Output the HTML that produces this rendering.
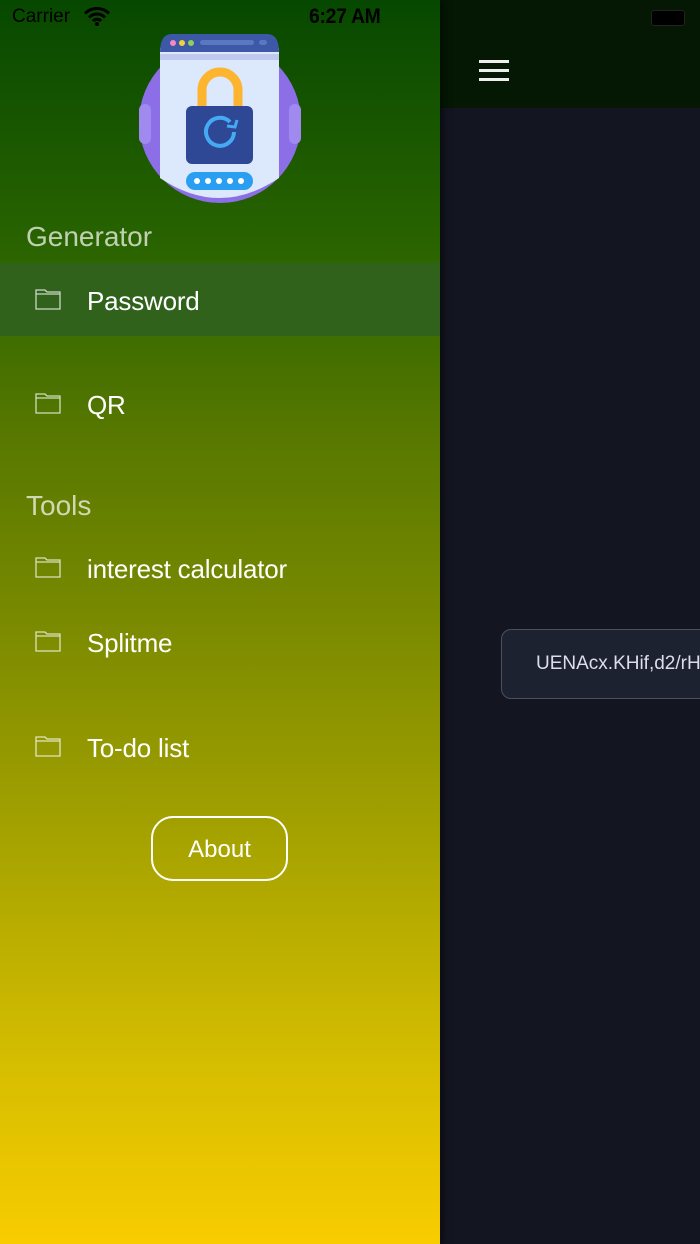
<!DOCTYPE html>
<html><head><meta charset="utf-8"><style>
html,body{margin:0;padding:0;width:700px;height:1244px;overflow:hidden;font-family:"Liberation Sans",sans-serif}
#right{position:absolute;left:440px;top:0;width:260px;height:1244px;background:#131520}
#rh{position:absolute;left:0;top:0;width:260px;height:108px;background:#041804}
#drawer{position:absolute;left:0;top:0;width:440px;height:1244px;background:linear-gradient(180deg,#064800 0%,#2a6400 20%,#577800 35%,#7a8a00 50%,#a7a300 68%,#d4bd00 85%,#f8cc00 100%);box-shadow:2px 0 8px rgba(0,0,0,.6)}
.t{position:absolute;color:#fff}
.sec{position:absolute;left:26px;font-size:28px;color:rgba(255,255,255,.7)}
.item{position:absolute;left:87px;font-size:26px;color:#fff;letter-spacing:-0.2px}
.ic{position:absolute;left:35px}
</style></head><body>
<div id="right"><div id="rh">
<div style="position:absolute;left:39px;top:60px;width:30px;height:3px;background:#eee"></div>
<div style="position:absolute;left:39px;top:69px;width:30px;height:3px;background:#eee"></div>
<div style="position:absolute;left:39px;top:78px;width:30px;height:3px;background:#eee"></div>
<div style="position:absolute;left:211px;top:10px;width:32px;height:14px;border:1px solid #222;border-radius:3px;background:#000"></div>
</div>
<div style="position:absolute;left:61px;top:629px;width:220px;height:70px;border:1.5px solid #4a505a;border-radius:10px;background:#1d2230;box-sizing:border-box"></div>
<div style="position:absolute;left:96px;top:653px;font-size:19px;color:#dde;white-space:nowrap">UENAcx.KHif,d2/rH</div>
</div>
<div id="drawer">
<div class="t" style="left:12px;top:6px;font-size:19px;color:#000">Carrier</div>
<svg style="position:absolute;left:84px;top:7px" width="26" height="19" viewBox="0 0 26 19"><path d="M1 6.5a17 17 0 0 1 24 0M5 10.5a11 11 0 0 1 16 0M9 14a5.5 5.5 0 0 1 8 0" stroke="#000" stroke-width="3" fill="none"/><circle cx="13" cy="17" r="2" fill="#000"/></svg>
<div class="t" style="left:309px;top:5px;font-size:21px;color:#000;font-weight:bold;letter-spacing:-0.3px;transform:scaleX(.92);transform-origin:left">6:27 AM</div>
<svg style="position:absolute;left:139px;top:34px" width="162" height="170" viewBox="0 0 162 170">
<circle cx="81" cy="88" r="81" fill="#8c6ee6"/>
<rect x="0" y="70" width="12" height="40" rx="6" fill="#a08af0"/><rect x="150" y="70" width="12" height="40" rx="6" fill="#a08af0"/>
<path d="M21 14h119v130q-60 40-119 0z" fill="#dce8fb"/>
<rect x="21" y="20" width="119" height="6" fill="#c0c8f0"/>
<path d="M21 18q0-18 12-18h95q12 0 12 18z" fill="#3c58a6"/>
<circle cx="34" cy="9" r="3" fill="#f48ac0"/><circle cx="43" cy="9" r="3" fill="#f4d13a"/><circle cx="52" cy="9" r="3" fill="#8ed05a"/>
<rect x="61" y="6" width="54" height="5" rx="2.5" fill="#5878c0"/><rect x="120" y="6" width="8" height="5" rx="2.5" fill="#5878c0"/>
<path d="M63 75V56a18 18 0 0 1 36 0v19" stroke="#fdb52f" stroke-width="9" fill="none"/>
<rect x="47" y="72" width="67" height="58" rx="6" fill="#2e4896"/>
<path d="M95 98a14 14 0 1 1-4-10" stroke="#44aaf2" stroke-width="4" fill="none"/><path d="M88 92l8 1 2-7" stroke="#44aaf2" stroke-width="3" fill="none"/>
<rect x="47" y="138" width="67" height="18" rx="9" fill="#2a9ef0"/>
<circle cx="58" cy="147" r="3" fill="#fff"/><circle cx="69" cy="147" r="3" fill="#fff"/><circle cx="80" cy="147" r="3" fill="#fff"/><circle cx="91" cy="147" r="3" fill="#fff"/><circle cx="102" cy="147" r="3" fill="#fff"/>
</svg>
<div class="sec" style="top:221px">Generator</div>
<div style="position:absolute;left:0;top:263px;width:440px;height:73px;background:#31621c"></div>
<div class="item" style="top:286px">Password</div>
<div class="item" style="top:390px">QR</div>
<div class="sec" style="top:490px">Tools</div>
<div class="item" style="top:554px">interest calculator</div>
<div class="item" style="top:628px">Splitme</div>
<div class="item" style="top:733px">To-do list</div>
<svg class="ic" style="top:287px" width="26" height="24" viewBox="0 0 26 24"><path d="M1 3h9l2 2h13v17H1z M1 7h24" stroke="rgba(255,255,255,.75)" stroke-width="1.3" fill="none"/></svg>
<svg class="ic" style="top:391px" width="26" height="24" viewBox="0 0 26 24"><path d="M1 3h9l2 2h13v17H1z M1 7h24" stroke="rgba(255,255,255,.75)" stroke-width="1.3" fill="none"/></svg>
<svg class="ic" style="top:555px" width="26" height="24" viewBox="0 0 26 24"><path d="M1 3h9l2 2h13v17H1z M1 7h24" stroke="rgba(255,255,255,.75)" stroke-width="1.3" fill="none"/></svg>
<svg class="ic" style="top:629px" width="26" height="24" viewBox="0 0 26 24"><path d="M1 3h9l2 2h13v17H1z M1 7h24" stroke="rgba(255,255,255,.75)" stroke-width="1.3" fill="none"/></svg>
<svg class="ic" style="top:734px" width="26" height="24" viewBox="0 0 26 24"><path d="M1 3h9l2 2h13v17H1z M1 7h24" stroke="rgba(255,255,255,.75)" stroke-width="1.3" fill="none"/></svg>
<div style="position:absolute;left:151px;top:816px;width:137px;height:65px;border:2px solid #fff;border-radius:22px;box-sizing:border-box;color:#fff;font-size:24px;text-align:center;line-height:63px">About</div>
</div>
</body></html>
